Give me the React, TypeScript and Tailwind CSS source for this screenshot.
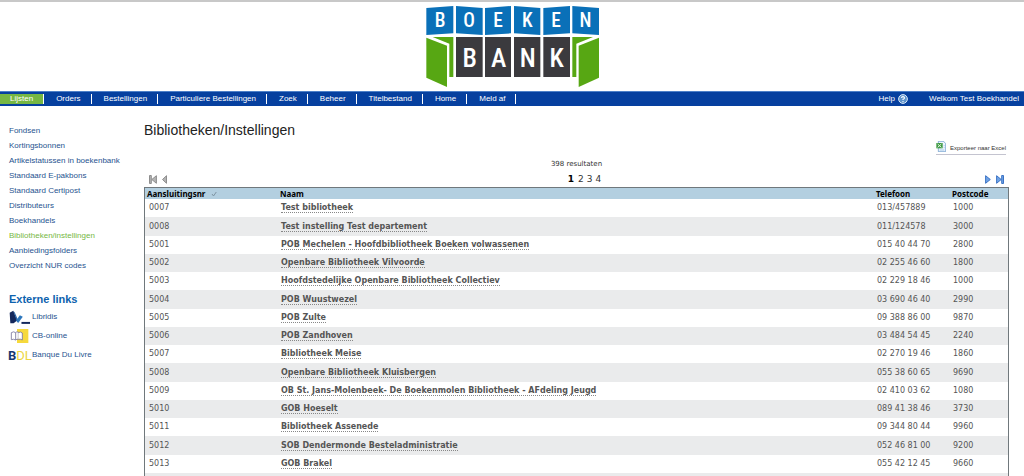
const navItems = ['Lijsten', 'Orders', 'Bestellingen', 'Particuliere Bestellingen', 'Zoek', 'Beheer', 'Titelbestand', 'Home', 'Meld af'];

const listLinks = [
  'Fondsen',
  'Kortingsbonnen',
  'Artikelstatussen in boekenbank',
  'Standaard E-pakbons',
  'Standaard Certipost',
  'Distributeurs',
  'Boekhandels',
  'Bibliotheken/instellingen',
  'Aanbiedingsfolders',
  'Overzicht NUR codes',
];

const rows = [
  ['0007', 'Test bibliotheek', '013/457889', '1000'],
  ['0008', 'Test instelling Test departement', '011/124578', '3000'],
  ['5001', 'POB Mechelen - Hoofdbibliotheek Boeken volwassenen', '015 40 44 70', '2800'],
  ['5002', 'Openbare Bibliotheek Vilvoorde', '02 255 46 60', '1800'],
  ['5003', 'Hoofdstedelijke Openbare Bibliotheek Collectiev', '02 229 18 46', '1000'],
  ['5004', 'POB Wuustwezel', '03 690 46 40', '2990'],
  ['5005', 'POB Zulte', '09 388 86 00', '9870'],
  ['5006', 'POB Zandhoven', '03 484 54 45', '2240'],
  ['5007', 'Bibliotheek Meise', '02 270 19 46', '1860'],
  ['5008', 'Openbare Bibliotheek Kluisbergen', '055 38 60 65', '9690'],
  ['5009', 'OB St. Jans-Molenbeek- De Boekenmolen Bibliotheek - AFdeling Jeugd', '02 410 03 62', '1080'],
  ['5010', 'GOB Hoeselt', '089 41 38 46', '3730'],
  ['5011', 'Bibliotheek Assenede', '09 344 80 44', '9960'],
  ['5012', 'SOB Dendermonde Besteladministratie', '052 46 81 00', '9200'],
  ['5013', 'GOB Brakel', '055 42 12 45', '9660'],
];

function Logo() {
  const top = [
    ['B', 90],
    ['O', 177],
    ['E', 264],
    ['K', 352],
    ['E', 438],
    ['N', 526],
  ] as const;
  const bottom = [
    ['B', 179],
    ['A', 266],
    ['N', 353],
    ['K', 440],
  ] as const;
  return (
    <svg viewBox="48 15 519 249" className="h-[83px] w-[173px]" role="img" aria-label="Boekenbank">
      <g fill="#0a70b8">
        <path d="M49 24 130 18V100L49 105Z" />
        <path d="M138 18 218 24V105L138 100Z" />
        <path d="M225 24 303 18V100L225 105Z" />
        <path d="M312 18 391 24V105L312 100Z" />
        <path d="M400 24 480 18V100L400 105Z" />
        <path d="M487 18 567 24V105L487 100Z" />
      </g>
      <g fill="#3b3a3e">
        <path d="M138 111H218V231H138Z" />
        <path d="M225 111H303V231H225Z" />
        <path d="M312 111H391V231H312Z" />
        <path d="M400 111H480V231H400Z" />
      </g>
      <g fill="#57a713">
        <path d="M49 113 111 137V261L49 233Z" />
        <path d="M68 111H130V231H118V131Z" />
        <path d="M567 113 506 137V261L567 233Z" />
        <path d="M549 111H487V231H499V131Z" />
      </g>
      <g fill="#fff" textAnchor="middle" className="font-['Roboto_Condensed','Roboto',sans-serif] font-medium">
        {top.map(([c, x]) => (
          <text key={x} x={x} y="82" fontSize="58">{c}</text>
        ))}
        {bottom.map(([c, x]) => (
          <text key={x} x={x} y="200" fontSize="78">{c}</text>
        ))}
      </g>
    </svg>
  );
}

function PrevIcons() {
  return (
    <div className="flex items-center gap-[5px] text-[#8e8e8e]">
      <button type="button" aria-label="Eerste pagina">
        <svg viewBox="0 0 8 9" className="block h-[9px] w-2" fill="#b4b4b4" stroke="currentColor">
          <path d="M.5 .5H2.3V8.5H.5Z" />
          <path d="M7.4 .7V8.3L2.8 4.5Z" />
        </svg>
      </button>
      <button type="button" aria-label="Vorige pagina">
        <svg viewBox="0 0 5 9" className="block h-[9px] w-[5px]" fill="#b4b4b4" stroke="currentColor">
          <path d="M4.5 .7V8.3L.5 4.5Z" />
        </svg>
      </button>
    </div>
  );
}

function NextIcons() {
  return (
    <div className="flex items-center gap-[5px] text-[#3c73c4]">
      <button type="button" aria-label="Volgende pagina">
        <svg viewBox="0 0 6 9" className="block h-[9px] w-1.5" fill="#6fa3e6" stroke="currentColor">
          <path d="M.6 .7V8.3L5.3 4.5Z" />
        </svg>
      </button>
      <button type="button" aria-label="Laatste pagina">
        <svg viewBox="0 0 8 9" className="block h-[9px] w-2" fill="#6fa3e6" stroke="currentColor">
          <path d="M.6 .7V8.3L5.2 4.5Z" />
          <path d="M5.7 .5H7.5V8.5H5.7Z" />
        </svg>
      </button>
    </div>
  );
}

function LibridisIcon() {
  return (
    <svg viewBox="0 0 64 42" className="h-3.5 w-[21px]" aria-hidden="true">
      <path d="M2 8 13 2 25 32 14 40 4 40Z" fill="#14285c" />
      <path d="M13 2 18 8 29 34 25 38Z" fill="#2b66a8" />
      <path d="M22 31 33 16 42 20 28 39Z" fill="#2d77bd" />
      <path d="M38 36H64V42H38Z" fill="#14285c" />
    </svg>
  );
}

function CbIcon() {
  return (
    <svg viewBox="0 0 60 42" className="h-3.5 w-5" aria-hidden="true">
      <path d="M24 0H58V42H24Z" fill="#f6d93c" />
      <path d="M7 11Q14 6 20 11Q23 7 28 9V31Q24 29 20 33Q14 29 7 32Z" fill="#fff" stroke="#77749b" strokeWidth="2.5" />
      <path d="M20 11V33M28 11Q35 7 40 12V33Q34 29 28 31" fill="#fff" stroke="#77749b" strokeWidth="2.5" />
    </svg>
  );
}

function BdlIcon() {
  return (
    <svg viewBox="0 0 69 48" className="h-4 w-[23px] overflow-visible" aria-hidden="true">
      <text x="-3" y="38" fontSize="39" className="font-['Roboto',sans-serif]">
        <tspan fill="#17386f" className="font-bold">B</tspan>
        <tspan fill="#ecd640">DL</tspan>
      </text>
    </svg>
  );
}

const externalLinks = [
  { label: 'Libridis', Icon: LibridisIcon },
  { label: 'CB-online', Icon: CbIcon },
  { label: 'Banque Du Livre', Icon: BdlIcon },
];

export default function App() {
  return (
    <div className="h-screen overflow-hidden bg-white font-['Liberation_Sans',Arial,sans-serif] text-[#333]">
      <header>
        <div className="flex h-[91px] justify-center border-t-2 border-[#c8c8c8] pt-[3px]">
          <Logo />
        </div>
        <nav className="flex h-[15px] items-center justify-between border-t border-[#4d80c8] bg-[#06409f] text-[8px] leading-[10px] font-medium text-white">
          <ul className="flex">
            {navItems.map((item, i) => (
              <li key={item} className={i === 0 ? 'border-r border-white bg-[#76b743]' : 'border-r border-white'}>
                <a href="#" className={i === 0 ? 'block pr-2.5 pl-2.5' : 'block pr-2.5 pl-3'}>{item}</a>
              </li>
            ))}
          </ul>
          <div className="flex items-center gap-[21px] pr-[5px]">
            <a href="#" className="flex items-center gap-[3px]">
              Help
              <svg viewBox="0 0 10 10" className="size-2.5" aria-hidden="true">
                <circle cx="5" cy="5" r="4.4" fill="#5d93cc" stroke="#dbe8f6" strokeWidth="1" />
                <path d="M3.5 4Q3.6 2.6 5 2.6T6.5 3.9Q6.5 4.7 5 5.3V6.1M5 7V8" fill="none" stroke="#fff" strokeWidth="1.1" />
              </svg>
            </a>
            <span>Welkom Test Boekhandel</span>
          </div>
        </nav>
      </header>

      <div className="flex">
        <aside className="w-36 shrink-0 pt-[17px] pl-[9px] text-[#27538f]">
          <ul className="text-[8px] leading-[15px]">
            {listLinks.map((item) => (
              <li key={item}>
                <a href="#" className={item === 'Bibliotheken/instellingen' ? 'text-[#76b743]' : ''}>{item}</a>
              </li>
            ))}
          </ul>
          <h2 className="mt-[18px] text-[11px] leading-4 font-bold text-[#0d62ae]">Externe links</h2>
          <ul className="text-[8px]">
            {externalLinks.map(({ label, Icon }) => (
              <li key={label}>
                <a href="#" className="flex h-[19px] items-center">
                  <span className="w-[23px]"><Icon /></span>
                  {label}
                </a>
              </li>
            ))}
          </ul>
        </aside>

        <main className="min-w-0 flex-1 pt-4 pr-[15px] font-['DejaVu_Sans',Verdana,sans-serif]">
          <h1 className="font-['Liberation_Sans',Arial,sans-serif] text-[14px] leading-4 text-[#222]">Bibliotheken/Instellingen</h1>
          <div className="flex justify-end pt-[3px] pr-[3px]">
            <a href="#" className="flex h-3.5 items-start gap-1 border-b border-[#c4c4d0] font-['Liberation_Sans',Arial,sans-serif] text-[6px] leading-[14px]">
              <svg viewBox="0 0 30 33" className="h-[11px] w-2.5" aria-hidden="true">
                <path d="M7 1H23L29 8V32H7Z" fill="#eef6ff" stroke="#5b8fc6" strokeWidth="2" />
                <path d="M1 6H20V22H1Z" fill="#3f9a45" />
                <path d="M5 9 16 19M16 9 5 19" stroke="#e4f4e0" strokeWidth="3" />
                <path d="M11 27H25M23 14H26M23 20H26" stroke="#8ab3dc" strokeWidth="2" />
              </svg>
              Exporteer naar Excel
            </a>
          </div>
          <p className="pt-1 text-center text-[7px] leading-[10px]">398 resultaten</p>
          <div className="grid h-[18px] grid-cols-3 items-center px-[5px] pt-0.5">
            <PrevIcons />
            <div className="flex justify-center gap-[3px] pl-4 text-[9px] leading-3">
              <b className="pr-px text-black">1</b>
              <a href="#">2</a>
              <a href="#">3</a>
              <a href="#">4</a>
            </div>
            <div className="flex justify-end"><NextIcons /></div>
          </div>

          <table className="w-full table-fixed border-separate border-spacing-0 border-x border-t border-[#70787c] text-left text-[8px] leading-[10px] text-[#555]">
            <colgroup>
              <col className="w-[133px]" />
              <col />
              <col className="w-[76px]" />
              <col className="w-[58px]" />
            </colgroup>
            <thead className="bg-[#b3cfe0] font-['Noto_Sans','Open_Sans',sans-serif] text-black">
              <tr className="h-[11px]">
                <th className="p-0 pl-0.5">
                  <button type="button" className="flex items-center gap-1.5 font-bold">
                    Aansluitingsnr
                    <svg viewBox="0 0 6 6" className="size-1.5" aria-hidden="true">
                      <path d="M1 3 2.5 5 5.3 1" fill="none" stroke="#7f95a3" />
                    </svg>
                  </button>
                </th>
                <th className="p-0 pl-0.5">Naam</th>
                <th className="p-0 pl-0.5">Telefoon</th>
                <th className="p-0 pl-0.5">Postcode</th>
              </tr>
            </thead>
            <tbody>
              {rows.map(([nr, naam, telefoon, postcode]) => (
                <tr key={nr} className="h-[18px] even:bg-[#eaebec] [&:nth-child(4n+2)]:h-[19px]">
                  <td className="p-0 pl-1">{nr}</td>
                  <td className="p-0 pl-[3px]">
                    <a href="#" className="border-b border-dotted border-[#888] font-bold">{naam}</a>
                  </td>
                  <td className="p-0 pl-[3px]">{telefoon}</td>
                  <td className="p-0 pl-[3px]">{postcode}</td>
                </tr>
              ))}
              <tr className="h-[18px] bg-[#eaebec]">
                <td colSpan={4} className="p-0" />
              </tr>
            </tbody>
          </table>
        </main>
      </div>
    </div>
  );
}
